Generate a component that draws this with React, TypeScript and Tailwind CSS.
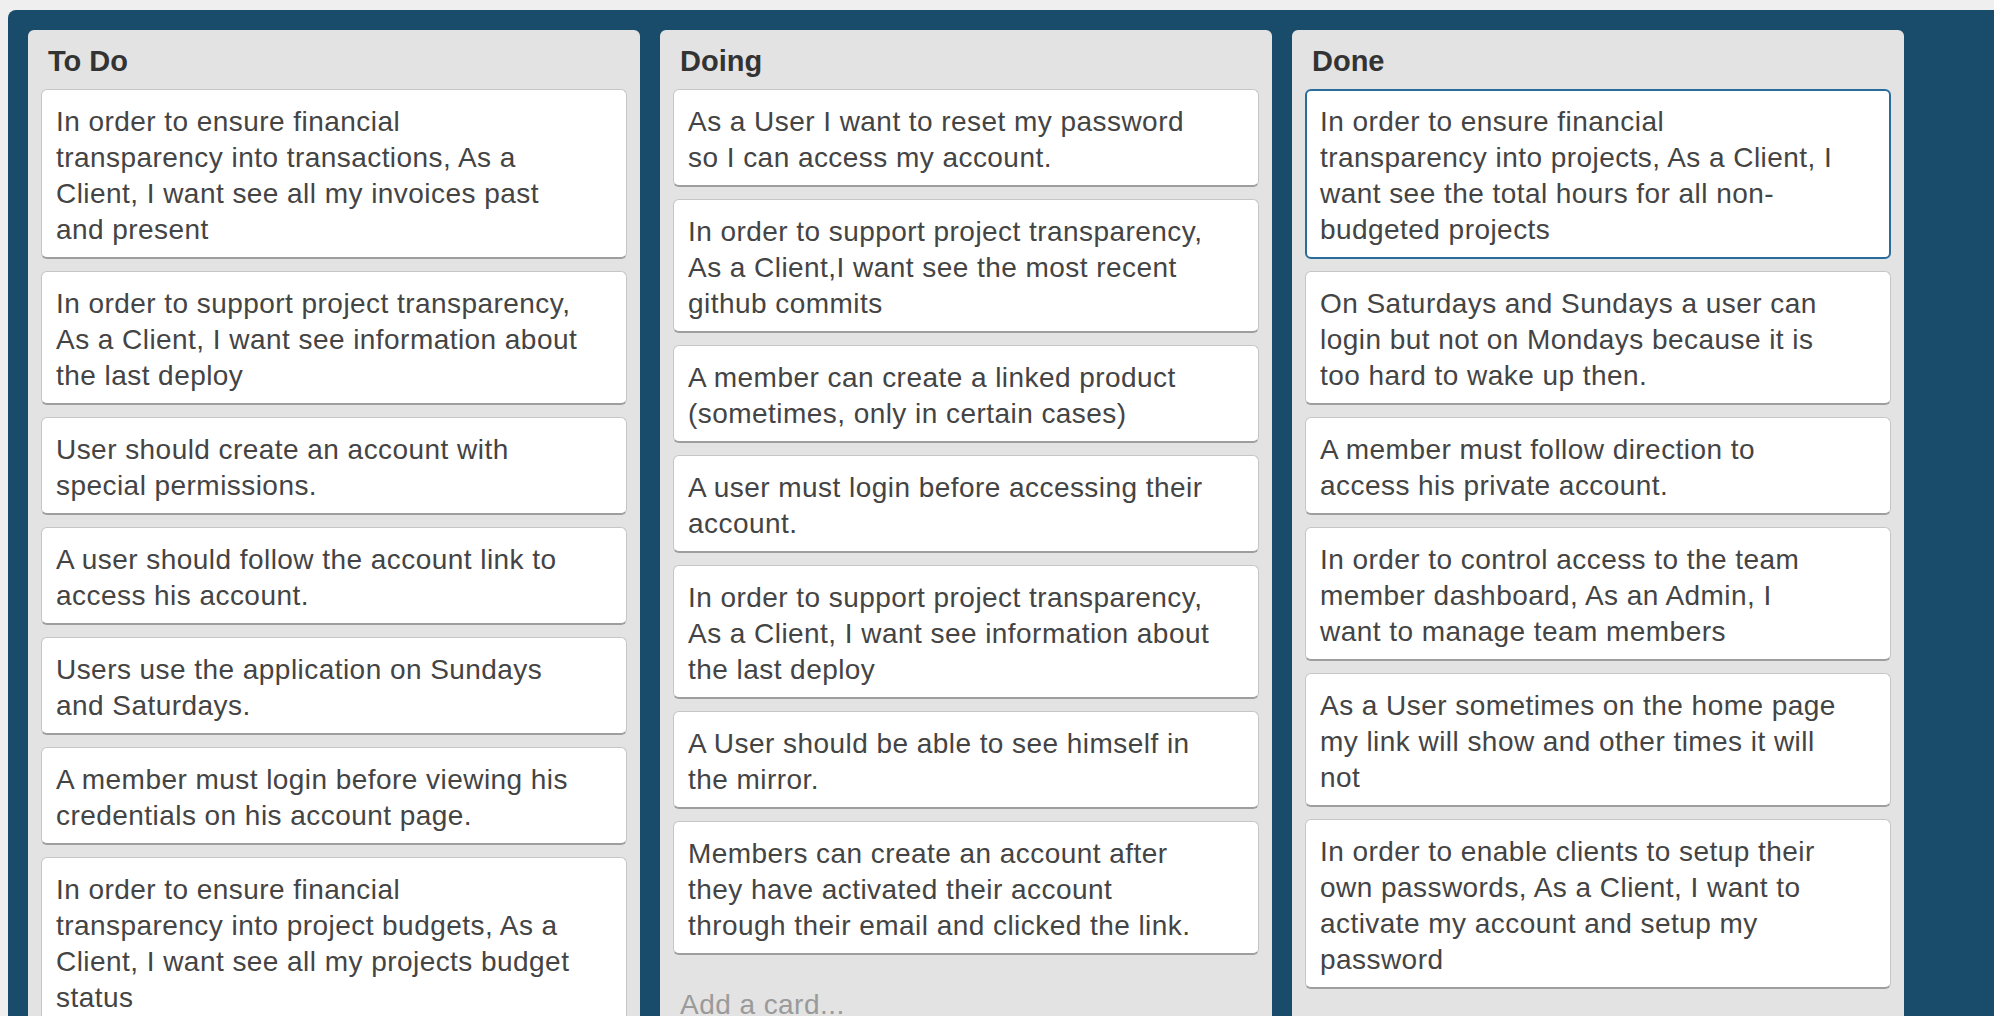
import React from "react";

type Card = { id: string; lines: string[]; active?: boolean };
type List = { id: string; title: string; cards: Card[] };

const lists: List[] = [
  {
    id: "todo",
    title: "To Do",
    cards: [
      {
        id: "t1",
        lines: [
          "In order to ensure financial",
          "transparency into transactions, As a",
          "Client, I want see all my invoices past",
          "and present",
        ],
      },
      {
        id: "t2",
        lines: [
          "In order to support project transparency,",
          "As a Client, I want see information about",
          "the last deploy",
        ],
      },
      { id: "t3", lines: ["User should create an account with", "special permissions."] },
      { id: "t4", lines: ["A user should follow the account link to", "access his account."] },
      { id: "t5", lines: ["Users use the application on Sundays", "and Saturdays."] },
      { id: "t6", lines: ["A member must login before viewing his", "credentials on his account page."] },
      {
        id: "t7",
        lines: [
          "In order to ensure financial",
          "transparency into project budgets, As a",
          "Client, I want see all my projects budget",
          "status",
        ],
      },
    ],
  },
  {
    id: "doing",
    title: "Doing",
    cards: [
      { id: "d1", lines: ["As a User I want to reset my password", "so I can access my account."] },
      {
        id: "d2",
        lines: [
          "In order to support project transparency,",
          "As a Client,I want see the most recent",
          "github commits",
        ],
      },
      { id: "d3", lines: ["A member can create a linked product", "(sometimes, only in certain cases)"] },
      { id: "d4", lines: ["A user must login before accessing their", "account."] },
      {
        id: "d5",
        lines: [
          "In order to support project transparency,",
          "As a Client, I want see information about",
          "the last deploy",
        ],
      },
      { id: "d6", lines: ["A User should be able to see himself in", "the mirror."] },
      {
        id: "d7",
        lines: [
          "Members can create an account after",
          "they have activated their account",
          "through their email and clicked the link.",
        ],
      },
    ],
  },
  {
    id: "done",
    title: "Done",
    cards: [
      {
        id: "n1",
        active: true,
        lines: [
          "In order to ensure financial",
          "transparency into projects, As a Client, I",
          "want see the total hours for all non-",
          "budgeted projects",
        ],
      },
      {
        id: "n2",
        lines: [
          "On Saturdays and Sundays a user can",
          "login but not on Mondays because it is",
          "too hard to wake up then.",
        ],
      },
      { id: "n3", lines: ["A member must follow direction to", "access his private account."] },
      {
        id: "n4",
        lines: [
          "In order to control access to the team",
          "member dashboard, As an Admin, I",
          "want to manage team members",
        ],
      },
      {
        id: "n5",
        lines: [
          "As a User sometimes on the home page",
          "my link will show and other times it will",
          "not",
        ],
      },
      {
        id: "n6",
        lines: [
          "In order to enable clients to setup their",
          "own passwords, As a Client, I want to",
          "activate my account and setup my",
          "password",
        ],
      },
    ],
  },
];

const CardItem = ({ card }: { card: Card }) => (
  <div
    className={
      card.active
        ? "rounded-[6px] border-2 border-[#2b6c9f] bg-white pt-[13px] pb-[9px] px-[13px]"
        : "rounded-[6px] border border-b-2 border-[#c6c6c6] border-b-[#9e9e9e] bg-white pt-[14px] pb-[9px] px-[14px]"
    }
  >
    <p className="text-[28px] leading-[36px] tracking-[0.45px] text-[#444] whitespace-nowrap">
      {card.lines.map((line, i) => (
        <React.Fragment key={i}>
          {i > 0 && <br />}
          {line}
        </React.Fragment>
      ))}
    </p>
  </div>
);

const ListColumn = ({ list }: { list: List }) => (
  <div className="w-[612px] shrink-0 self-start rounded-[6px] bg-[#e3e3e3]">
    <h2 className="pt-[13px] pb-[10px] px-[20px] text-[29px] leading-[36px] font-bold text-[#333]">
      {list.title}
    </h2>
    <div className="flex flex-col gap-[12px] px-[13px]">
      {list.cards.map((card) => (
        <CardItem key={card.id} card={card} />
      ))}
    </div>
    <div className="px-[20px] pt-[32px] pb-[20px] text-[28px] leading-[36px] tracking-[0.45px] text-[#9a9a9a]">
      Add a card...
    </div>
  </div>
);

export default function App() {
  return (
    <div
      className="h-[1016px] overflow-hidden bg-[#efefef] pt-[10px] pl-[8px]"
      style={{ fontFamily: '"Liberation Sans", Arial, sans-serif' }}
    >
      <div className="flex h-full items-start gap-[20px] rounded-tl-[8px] bg-[#184c6a] pt-[20px] pl-[20px]">
        {lists.map((list) => (
          <ListColumn key={list.id} list={list} />
        ))}
      </div>
    </div>
  );
}
